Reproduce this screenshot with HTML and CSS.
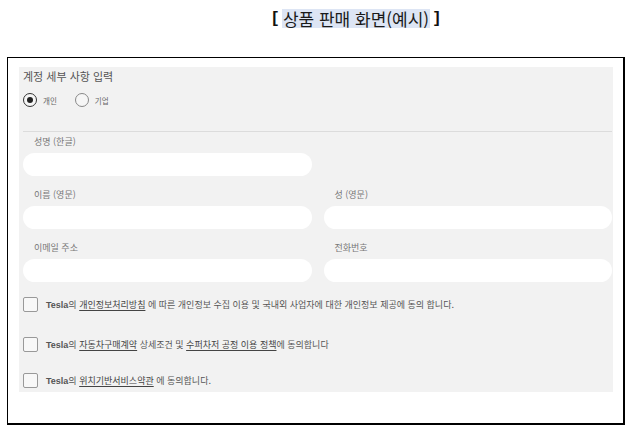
FILE: index.html
```html
<!DOCTYPE html>
<html lang="ko">
<head>
<meta charset="utf-8">
<link rel="stylesheet" href="styles.css">
</head>
<body>
<div class="header">
  <span class="bracket">[</span>
  <span class="headline">상품 판매 화면(예시)</span>
  <span class="bracket">]</span>
</div>
<div class="frame">
  <div class="panel">
    <div class="title">계정 세부 사항 입력</div>
    <div class="radios">
      <label class="radio"><span class="dot on"></span><span>개인</span></label>
      <label class="radio"><span class="dot"></span><span>기업</span></label>
    </div>
    <div class="divider"></div>
    <div class="grid">
      <div class="field">
        <div class="label">성명 (한글)</div>
        <div class="input"></div>
      </div>
      <div class="field"></div>
      <div class="field">
        <div class="label">이름 (영문)</div>
        <div class="input"></div>
      </div>
      <div class="field">
        <div class="label">성 (영문)</div>
        <div class="input"></div>
      </div>
      <div class="field">
        <div class="label">이메일 주소</div>
        <div class="input"></div>
      </div>
      <div class="field">
        <div class="label">전화번호</div>
        <div class="input"></div>
      </div>
    </div>
    <div class="checks">
      <div class="check"><span class="box"></span><span class="ctext"><b>Tesla</b>의 <u>개인정보처리방침</u> 에 따른 개인정보 수집 이용 및 국내외 사업자에 대한 개인정보 제공에 동의 합니다.</span></div>
      <div class="check second"><span class="box"></span><span class="ctext"><b>Tesla</b>의 <u>자동차구매계약</u> 상세조건 및 <u>수퍼차저 공정 이용 정책</u>에 동의합니다</span></div>
      <div class="check third"><span class="box"></span><span class="ctext"><b>Tesla</b>의 <u>위치기반서비스약관</u> 에 동의합니다.</span></div>
    </div>
  </div>
</div>
</body>
</html>
```
FILE: styles.css
```css
* { box-sizing: border-box; }
body {
  margin: 0;
  background: #fff;
  font-family: "Noto Sans CJK KR", "Noto Sans", sans-serif;
}
.header {
  height: 57px;
  display: flex;
  justify-content: center;
  align-items: flex-start;
  padding-top: 7px;
  padding-left: 70px;
  font-size: 17px;
  line-height: 22px;
  color: #1a1a1a;
}
.bracket {
  font-weight: 700;
  color: #111;
  font-family: "Liberation Sans", sans-serif;
  font-size: 17px;
}
.headline {
  background: #dde5f4;
  margin: 0 4px 0 4px;
  padding: 0 1px;
  line-height: 19px;
  margin-top: 2px;
}
.frame {
  margin: 0 17px 0 7px;
  border: 1px solid #000;
  border-right-width: 2px;
  border-bottom-width: 2px;
  padding: 9px 10px 30px 11px;
  height: 368px;
}
.panel {
  background: #f2f2f2;
  padding: 2px 1px 4px 4px;
}
.title {
  font-size: 11px;
  line-height: 15px;
  color: #555;
}
.radios {
  display: flex;
  gap: 18px;
  margin-top: 9px;
}
.radio {
  display: flex;
  align-items: center;
  gap: 6px;
  font-size: 7.5px;
  color: #666;
  height: 14px;
}
.dot {
  width: 14px;
  height: 14px;
  border-radius: 50%;
  border: 1px solid #888;
  display: flex;
  align-items: center;
  justify-content: center;
  background: #f6f6f6;
}
.dot.on { border: 1.5px solid #333; }
.dot.on::after {
  content: "";
  width: 6px;
  height: 6px;
  border-radius: 50%;
  background: #222;
}
.divider {
  height: 1px;
  background: #dcdcdc;
  margin-top: 24px;
}
.grid {
  display: grid;
  grid-template-columns: 1fr 1fr;
  column-gap: 12px;
  row-gap: 13px;
  margin-top: 4px;
}
.label {
  font-size: 9px;
  line-height: 12px;
  color: #777;
  padding-left: 11px;
  margin-bottom: 5px;
}
.input {
  height: 23px;
  border-radius: 12px;
  background: #fff;
}
.checks {
  display: flex;
  flex-direction: column;
  margin-top: 15px;
}
.check {
  display: flex;
  align-items: center;
  gap: 8px;
  height: 15px;
  font-size: 9px;
  color: #555;
}
.check.second { margin-top: 25px; }
.check.third { margin-top: 21px; }
.box {
  width: 15px;
  height: 15px;
  border: 1px solid #999;
  border-radius: 2px;
  background: #f8f8f8;
  flex: none;
}
.ctext b { font-weight: 600; color: #555; font-family: "Liberation Sans", "Noto Sans CJK KR", sans-serif; }
.ctext u { color: #444; text-underline-offset: 2px; }
```
